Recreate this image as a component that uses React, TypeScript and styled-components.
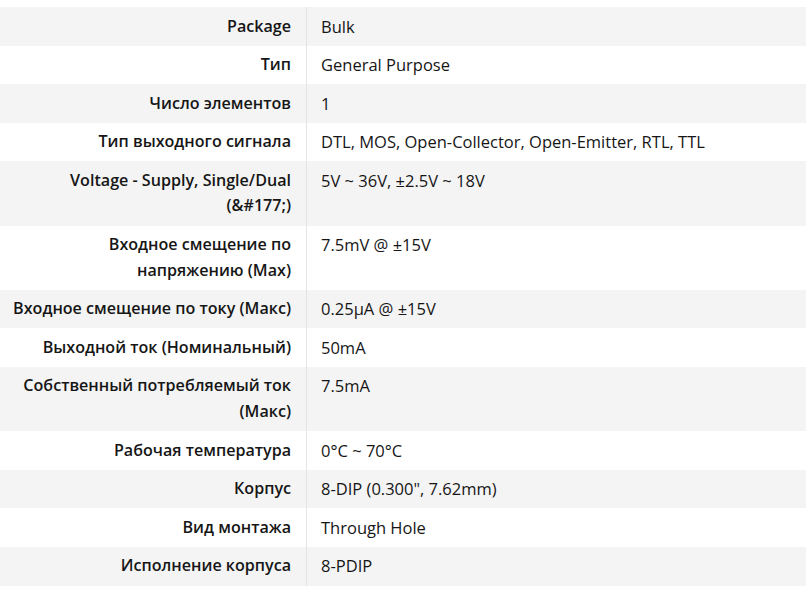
import React from "react";
import styled, { createGlobalStyle } from "styled-components";

const GlobalStyle = createGlobalStyle`
  html, body { margin: 0; padding: 0; background: #ffffff; }
  body { font-family: "Open Sans", "Noto Sans", sans-serif; color: #161616; }
`;

const Table = styled.div`
  margin-top: 7px;
  display: grid;
  grid-template-columns: 307px 1fr;
  width: 806px;
`;

const Row = styled.div<{ $striped: boolean }>`
  display: contents;
  & > div {
    background: ${(p) => (p.$striped ? "#f4f4f4" : "#ffffff")};
  }
`;

const Label = styled.div`
  padding: 6.5px 15px 6.5px 12px;
  text-align: right;
  font-weight: 600;
  font-size: 16.1px;
  line-height: 25.6px;
  border-right: 1px solid #e4e4e4;
`;

const Value = styled.div`
  padding: 6.5px 10px 6.5px 14px;
  font-size: 16.5px;
  line-height: 25.6px;
`;

const rows: [string, string][] = [
  ["Package", "Bulk"],
  ["Тип", "General Purpose"],
  ["Число элементов", "1"],
  ["Тип выходного сигнала", "DTL, MOS, Open-Collector, Open-Emitter, RTL, TTL"],
  ["Voltage - Supply, Single/Dual (&#177;)", "5V ~ 36V, ±2.5V ~ 18V"],
  ["Входное смещение по напряжению (Max)", "7.5mV @ ±15V"],
  ["Входное смещение по току (Макс)", "0.25µA @ ±15V"],
  ["Выходной ток (Номинальный)", "50mA"],
  ["Собственный потребляемый ток (Макс)", "7.5mA"],
  ["Рабочая температура", "0°C ~ 70°C"],
  ["Корпус", "8-DIP (0.300\", 7.62mm)"],
  ["Вид монтажа", "Through Hole"],
  ["Исполнение корпуса", "8-PDIP"],
];

export default function App() {
  return (
    <>
      <GlobalStyle />
      <Table>
        {rows.map(([k, v], i) => (
          <Row key={i} $striped={i % 2 === 0}>
            <Label>{k}</Label>
            <Value>{v}</Value>
          </Row>
        ))}
      </Table>
    </>
  );
}
